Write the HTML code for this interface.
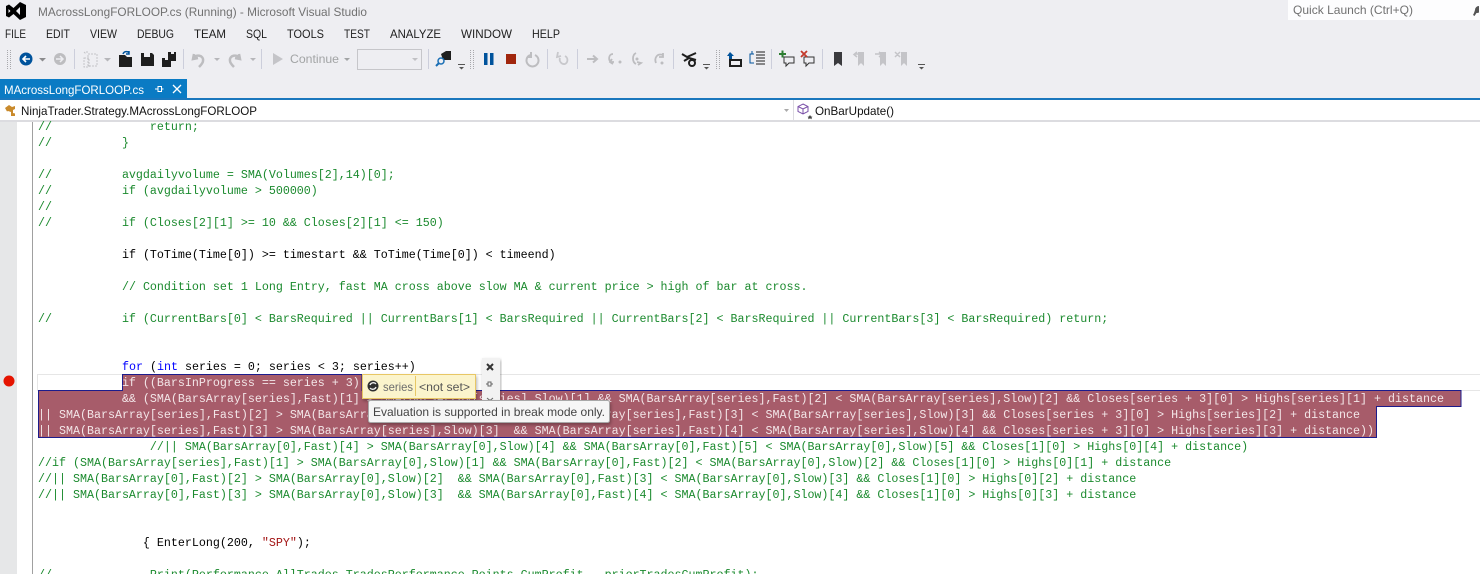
<!DOCTYPE html>
<html><head><meta charset="utf-8">
<style>
html,body{margin:0;padding:0;width:1480px;height:574px;overflow:hidden;background:#fff}
#c{position:absolute;left:0;top:0;width:1480px;height:574px;overflow:hidden}
svg{position:absolute;left:0;top:0}
.u{font-family:"Liberation Sans",sans-serif;font-size:12px}
pre{position:absolute;margin:0;left:38px;font:11.67px/16px "Liberation Mono",monospace;color:#000;white-space:pre}
.g{color:#1b8a2e}.k{color:#0000ff}.s{color:#a31515}.w{color:#f3e6e8}
</style></head><body><div id="c">
<svg width="1480" height="574" viewBox="0 0 1480 574">
<rect width="1480" height="100" fill="#eeeef2"/>
<rect x="0" y="100" width="1480" height="22" fill="#fff"/>
<rect x="0" y="120" width="1480" height="2" fill="#dcdce0"/>
<rect x="0" y="122" width="17" height="452" fill="#e6e7e8"/>
<rect x="32" y="122" width="1" height="452" fill="#a0a0a0"/>
<rect x="37.5" y="374.5" width="1443" height="16" fill="#fff" stroke="#e6e6e6"/>
<circle cx="9" cy="381" r="5.5" fill="#e51400"/>
<path d="M38.5 390.5H122.5V374.5H362V390.5H1461V406.5H1376.5V437.5H38.5Z" fill="#a75c6a" stroke="#1c1c8c"/>
</svg>
<pre style="top:119px"><span class="g">//              return;
//          }

//          avgdailyvolume = SMA(Volumes[2],14)[0];
//          if (avgdailyvolume &gt; 500000)
//
//          if (Closes[2][1] &gt;= 10 &amp;&amp; Closes[2][1] &lt;= 150)
</span>
            <span class="k"></span>if (ToTime(Time[0]) &gt;= timestart &amp;&amp; ToTime(Time[0]) &lt; timeend)

            <span class="g">// Condition set 1 Long Entry, fast MA cross above slow MA &amp; current price &gt; high of bar at cross.</span>

<span class="g">//          if (CurrentBars[0] &lt; BarsRequired || CurrentBars[1] &lt; BarsRequired || CurrentBars[2] &lt; BarsRequired || CurrentBars[3] &lt; BarsRequired) return;</span>


            <span class="k">for</span> (<span class="k">int</span> series = 0; series &lt; 3; series++)
<span class="w">            if ((BarsInProgress == series + 3)
            &amp;&amp; (SMA(BarsArray[series],Fast)[1] &gt; SMA(BarsArray[series],Slow)[1] &amp;&amp; SMA(BarsArray[series],Fast)[2] &lt; SMA(BarsArray[series],Slow)[2] &amp;&amp; Closes[series + 3][0] &gt; Highs[series][1] + distance
|| SMA(BarsArray[series],Fast)[2] &gt; SMA(BarsArray[series],Slow)[2]  &amp;&amp; SMA(BarsArray[series],Fast)[3] &lt; SMA(BarsArray[series],Slow)[3] &amp;&amp; Closes[series + 3][0] &gt; Highs[series][2] + distance
|| SMA(BarsArray[series],Fast)[3] &gt; SMA(BarsArray[series],Slow)[3]  &amp;&amp; SMA(BarsArray[series],Fast)[4] &lt; SMA(BarsArray[series],Slow)[4] &amp;&amp; Closes[series + 3][0] &gt; Highs[series][3] + distance))</span>
<span class="g">                //|| SMA(BarsArray[0],Fast)[4] &gt; SMA(BarsArray[0],Slow)[4] &amp;&amp; SMA(BarsArray[0],Fast)[5] &lt; SMA(BarsArray[0],Slow)[5] &amp;&amp; Closes[1][0] &gt; Highs[0][4] + distance)
//if (SMA(BarsArray[series],Fast)[1] &gt; SMA(BarsArray[0],Slow)[1] &amp;&amp; SMA(BarsArray[0],Fast)[2] &lt; SMA(BarsArray[0],Slow)[2] &amp;&amp; Closes[1][0] &gt; Highs[0][1] + distance
//|| SMA(BarsArray[0],Fast)[2] &gt; SMA(BarsArray[0],Slow)[2]  &amp;&amp; SMA(BarsArray[0],Fast)[3] &lt; SMA(BarsArray[0],Slow)[3] &amp;&amp; Closes[1][0] &gt; Highs[0][2] + distance
//|| SMA(BarsArray[0],Fast)[3] &gt; SMA(BarsArray[0],Slow)[3]  &amp;&amp; SMA(BarsArray[0],Fast)[4] &lt; SMA(BarsArray[0],Slow)[4] &amp;&amp; Closes[1][0] &gt; Highs[0][3] + distance</span>


               { EnterLong(200, <span class="s">"SPY"</span>);

<span class="g">//              Print(Performance.AllTrades.TradesPerformance.Points.CumProfit - priorTradesCumProfit);</span></pre>
<svg width="1480" height="574" viewBox="0 0 1480 574">
<defs><filter id="sh" x="-10%" y="-20%" width="120%" height="150%"><feDropShadow dx="1" dy="2" stdDeviation="1.5" flood-color="#000" flood-opacity=".3"/></filter></defs>
<!-- logo -->
<path fill-rule="evenodd" fill="#000" d="M20 2L26 5V17L20 20L13.5 14L9 17.500L6 16V6L9 4.500L13.500 8ZM20 7L16 11L20 15ZM8.500 9V13L10.500 11Z"/>
<g class="u">
<text x="38" y="16" fill="#717171" textLength="329" lengthAdjust="spacingAndGlyphs">MAcrossLongFORLOOP.cs (Running) - Microsoft Visual Studio</text>
<g fill="#1e1e1e">
<text x="5" y="38" textLength="21" lengthAdjust="spacingAndGlyphs">FILE</text><text x="46" y="38" textLength="24" lengthAdjust="spacingAndGlyphs">EDIT</text><text x="90" y="38" textLength="27" lengthAdjust="spacingAndGlyphs">VIEW</text><text x="137" y="38" textLength="37" lengthAdjust="spacingAndGlyphs">DEBUG</text><text x="194" y="38" textLength="32" lengthAdjust="spacingAndGlyphs">TEAM</text><text x="246" y="38" textLength="21" lengthAdjust="spacingAndGlyphs">SQL</text><text x="287" y="38" textLength="37" lengthAdjust="spacingAndGlyphs">TOOLS</text><text x="344" y="38" textLength="26" lengthAdjust="spacingAndGlyphs">TEST</text><text x="390" y="38" textLength="51" lengthAdjust="spacingAndGlyphs">ANALYZE</text><text x="461" y="38" textLength="51" lengthAdjust="spacingAndGlyphs">WINDOW</text><text x="532" y="38" textLength="28" lengthAdjust="spacingAndGlyphs">HELP</text>
</g>
<rect x="1288" y="0" width="192" height="20" fill="#fdfdfe"/>
<text x="1293" y="14" fill="#717171" textLength="120" lengthAdjust="spacingAndGlyphs">Quick Launch (Ctrl+Q)</text>
<path d="M1479 6a4 4 0 0 0-4 4l-1 3 -1 2 1.500 1 2-3a4 4 0 0 0 2.500-.5z" fill="#555"/>
<rect x="0" y="79" width="187" height="19" fill="#0a7bc4"/>
<rect x="0" y="98" width="1480" height="2" fill="#1a77bd"/>
<text x="4" y="94" fill="#fff" textLength="140" lengthAdjust="spacingAndGlyphs">MAcrossLongFORLOOP.cs</text>
<path d="M155 89h3m0-2.500v5h3.500v-5zm3.500 2.500h2" stroke="#fff" fill="none"/>
<path d="M173 85l8 8m0-8l-8 8" stroke="#fff" stroke-width="1.300" fill="none"/>
<text x="21" y="115" fill="#111" textLength="236" lengthAdjust="spacingAndGlyphs">NinjaTrader.Strategy.MAcrossLongFORLOOP</text>
<text x="815" y="115" fill="#111" textLength="79" lengthAdjust="spacingAndGlyphs">OnBarUpdate()</text>
<text x="290" y="63" fill="#a2a4a5" textLength="49" lengthAdjust="spacingAndGlyphs">Continue</text>
</g>
<!-- nav -->
<path d="M5 108l4-3 3 2 3-1v3l-2 1v3l2 .500v2.500h-4v-4l-3-1-1 .500z" fill="#c98a2c"/>
<path d="M784 109h5l-2.500 3z" fill="#aaa"/><rect x="793" y="100" width="1" height="20" fill="#dcdce0"/>
<path d="M803 104l5 2.500v5l-5 2.500-5-2.500v-5zM798 106.500l5 2.500 5-2.500M803 109v5" fill="none" stroke="#7a4fa8"/>
<path d="M810 115l1 1.500 1.500.200-1 1 .300 1.500-1.800-.8-1.800.8.300-1.500-1-1 1.500-.200z" fill="#444"/>
<!-- grippers -->
<g fill="none" stroke="#a8a8ac" stroke-dasharray="1 1">
<path d="M7.500 50v19M10.500 50v19M470.500 50v19M473.500 50v19M716.500 50v19M719.500 50v19"/>
</g>
<!-- separators -->
<path d="M74.500 49v20M183.500 49v20M261.500 49v20M428.500 49v20M547.500 49v20M577.500 49v20M673.500 49v20M771.500 49v20M822.500 49v20" stroke="#cccedb"/>
<rect x="357.500" y="49.500" width="64" height="20" fill="#eeeef2" stroke="#c6c6ca"/>
<!-- drops -->
<g fill="#8b8b8e">
<path d="M39 58h7l-3.500 3.500z"/><path d="M104 58h7l-3.500 3.500z" fill="#b6b6ba"/><path d="M214 58h6l-3 3z" fill="#b6b6ba"/><path d="M250 58h6l-3 3z" fill="#b6b6ba"/><path d="M344 58h6l-3 3z" fill="#a2a4a5"/><path d="M412 58h6l-3 3z" fill="#c0c0c4"/>
</g>
<g fill="#555"><path d="M458 64h7v1h-7zM459 67h5l-2.500 2.500zM703 64h7v1h-7zM704 67h5l-2.500 2.500zM918 64h7v1h-7zM919 67h5l-2.500 2.500z"/></g>
<!-- back/forward -->
<circle cx="26" cy="59" r="6.500" fill="#00539c"/><path d="M30 59h-7m3-3l-3 3 3 3" stroke="#fff" stroke-width="1.600" fill="none"/>
<circle cx="60" cy="59" r="6" fill="#bdbdc0"/><path d="M56 59h7m-3-3l3 3-3 3" stroke="#eeeef2" stroke-width="1.500" fill="none"/>
<!-- new project -->
<path d="M88 54h9v12h-9zM84 58h5v9h-5zM84 52l2 2M87 51v2" fill="none" stroke="#c4c4c8" stroke-dasharray="2 1"/>
<!-- open/save -->
<path d="M119 55h6l2 2h5v10h-13z" fill="#1e1e1e"/><path d="M123 54c1-3 5-3 6-1m0-2v3h-3" stroke="#00539c" stroke-width="1.500" fill="none"/>
<path d="M141 53h11l2 2v11h-13z" fill="#1e1e1e"/><rect x="144" y="53" width="6" height="4" fill="#eeeef2"/>
<path d="M162 58h9v9h-9z" fill="#1e1e1e"/><path d="M168 52h8v9h-5v-3h-3z" fill="#1e1e1e"/><rect x="165" y="58" width="3" height="2" fill="#eeeef2"/><rect x="171" y="52" width="3" height="2" fill="#eeeef2"/>
<!-- undo redo -->
<path d="M194 54l-1 5 5-1M193 58c3-4 11-3 10 3 0 2-2 4-4 6" stroke="#bdbdc0" stroke-width="2.500" fill="none"/>
<path d="M239 54l1 5-5-1M240 58c-3-4-11-3-10 3 0 2 2 4 4 6" stroke="#bdbdc0" stroke-width="2.500" fill="none"/>
<path d="M273 53l10 6-10 6z" fill="#c4c4c8"/>
<!-- attach -->
<path d="M441 54l5-3h5v9h-8z" fill="#1e1e1e"/><circle cx="441" cy="61" r="3" fill="#eeeef2" stroke="#1a6fb5" stroke-width="1.500"/><path d="M439 63l-3 3" stroke="#1a6fb5" stroke-width="2"/>
<!-- debug -->
<path d="M484 53h3.500v12H484zM490 53h3.500v12H490z" fill="#00539c"/>
<rect x="506" y="54" width="10" height="10" fill="#a1260d"/>
<path d="M530 55a6 6 0 1 0 5 0M531 52v5h-4" stroke="#bdbdc0" stroke-width="2" fill="none"/>
<path d="M558 52l-1 5 4-1M565 56a4.500 4.500 0 0 1 0 8 4.500 4.500 0 0 1-5-6" stroke="#c8c8cc" stroke-width="1.800" fill="none"/>
<g stroke="#bdbdc0" stroke-width="2" fill="none">
<path d="M587 59h9m-3-3.500l4 3.500-4 3.500"/>
<path d="M613 54c-5 0-5 8-1 8h2m-2-3l-2 3 3 2" stroke-width="1.800"/><circle cx="620" cy="62" r="1.500" fill="#bdbdc0" stroke="none"/>
<path d="M636 53c-4 2-4 9 0 11m2 1l3-2-4-1" stroke-width="1.800"/><circle cx="637" cy="59" r="1.500" fill="#bdbdc0" stroke="none"/>
<path d="M663 55c-6-2-9 3-7 8m7-10v4h-4" stroke-width="1.800"/><circle cx="662" cy="63" r="1.500" fill="#bdbdc0" stroke="none"/>
</g>
<!-- breakpoints -->
<path d="M682 54l5 3 9-4M684 61l5-3 7 2" stroke="#1e1e1e" stroke-width="2" fill="none"/><circle cx="692" cy="63" r="3" fill="none" stroke="#1e1e1e" stroke-width="2"/>
<!-- block -->
<rect x="730" y="60" width="11" height="6" fill="none" stroke="#1e1e1e" stroke-width="2"/><path d="M730 52l-3 4h2v3h3v-3h2z" fill="#00539c"/>
<path d="M754 54h-4v9h4M752 51v3" fill="none" stroke="#00539c"/><path d="M756 52h9M756 55h9M756 58h9M756 61h9M756 64h9" stroke="#1e1e1e"/>
<!-- comments -->
<path d="M784 57h10v6h-5l-3 3v-3h-2z" fill="none" stroke="#333"/><path d="M779 54h7M782.500 50.500v7" stroke="#2d7d32" stroke-width="2"/>
<path d="M804 57h10v6h-5l-3 3v-3h-2z" fill="none" stroke="#333"/><path d="M801 51l6 6m0-6l-6 6" stroke="#c3392b" stroke-width="1.800"/>
<!-- bookmarks -->
<path d="M834 52h8v14l-4-3-4 3z" fill="#3a3a3e"/>
<g fill="#c4c4c8"><path d="M858 52h6v14l-3-3-3 3z"/><path d="M880 52h6v14l-3-3-3 3z"/><path d="M901 52h6v14l-3-3-3 3z"/></g>
<path d="M860 54h-5m2-2l-3 2.500 3 2.500M875 54h6m-2-2l3 2.500-3 2.500M895 52l5 5m0-5l-5 5" stroke="#c4c4c8" stroke-width="1.500" fill="none"/>
<!-- popup -->
<rect x="482" y="358" width="18" height="44" fill="#f2f2f2" filter="url(#sh)"/>
<path d="M487 364l6 6m0-6l-6 6" stroke="#333" stroke-width="2" fill="none"/>
<path d="M486 384h2m0-2v4h3v-4zm3 2h2" stroke="#666" fill="none"/>
<path d="M487 398l3 2.500 3-2.500" stroke="#666" fill="none"/>
<rect x="362.500" y="374.500" width="113" height="24" fill="#fbf4cc" stroke="#e8c765" filter="url(#sh)"/>
<circle cx="373" cy="386" r="5.500" fill="#2e2e2e"/><path d="M370 385a3.500 3.500 0 0 1 6-1M376 387a3.500 3.500 0 0 1-6 1" stroke="#f0f0f0" stroke-width="1.300" fill="none"/>
<rect x="415" y="376" width="1" height="20" fill="#e8c765"/>
<text class="u" x="383" y="391" fill="#6d6d6d" textLength="30" lengthAdjust="spacingAndGlyphs">series</text>
<text class="u" x="419" y="391" fill="#555" textLength="51" lengthAdjust="spacingAndGlyphs">&lt;not set&gt;</text>
<rect x="368.500" y="400.500" width="241" height="22" rx="2" fill="#f6f6f6" stroke="#a8a8a8" filter="url(#sh)"/>
<text class="u" x="373" y="416" fill="#444" textLength="232" lengthAdjust="spacingAndGlyphs">Evaluation is supported in break mode only.</text>
</svg>
</div></body></html>
